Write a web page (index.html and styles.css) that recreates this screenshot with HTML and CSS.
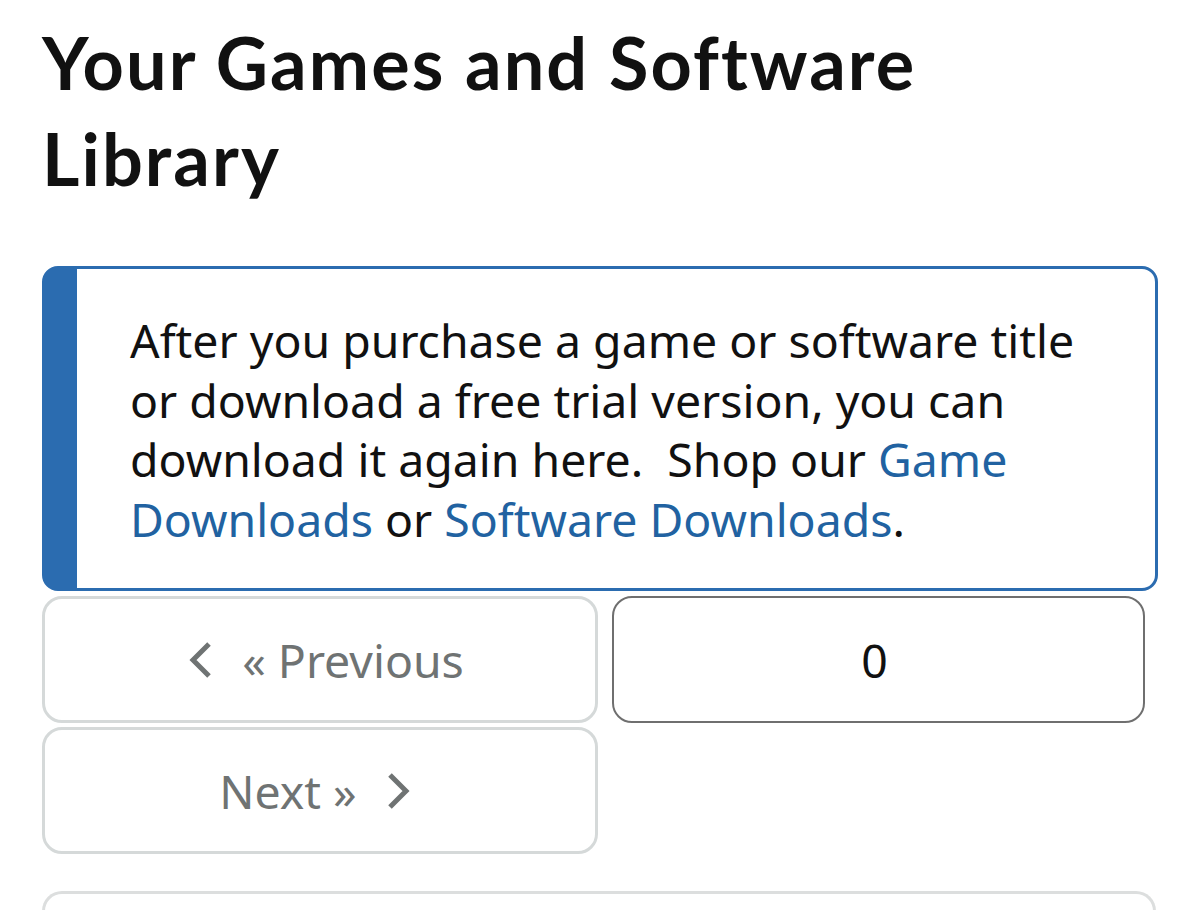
FILE: index.html
```html
<!DOCTYPE html>
<html lang="en">
<head>
<meta charset="utf-8">
<title>Your Games and Software Library</title>
<link rel="stylesheet" href="styles.css">
</head>
<body>
<main class="page">
  <h1 class="title">Your Games and Software Library</h1>
  <div class="alert">
    <p class="alert-text">After you purchase a game or software title or download a free trial version, you can download it again here.&nbsp; Shop our <a href="#">Game Downloads</a> or <a href="#">Software Downloads</a>.</p>
  </div>
  <nav class="pager">
    <button class="pbtn prev" type="button">
      <svg class="chev" viewBox="0 0 24 38" width="24" height="38"><path d="M21 3 L5 19 L21 35" fill="none" stroke="currentColor" stroke-width="5"/></svg>
      <span>« Previous</span>
    </button>
    <div class="page-num">0</div>
    <button class="pbtn next" type="button">
      <span>Next »</span>
      <svg class="chev" viewBox="0 0 24 38" width="24" height="38"><path d="M3 3 L19 19 L3 35" fill="none" stroke="currentColor" stroke-width="5"/></svg>
    </button>
  </nav>
  <div class="next-card"></div>
</main>
</body>
</html>
```
FILE: styles.css
```css
html, body {
  margin: 0;
  padding: 0;
  background: #ffffff;
}
body {
  font-family: "Noto Sans", sans-serif;
  color: #0f1111;
  overflow: hidden;
}
.page {
  padding: 14px 42px 0 42px;
}
.title {
  margin: 0;
  font-family: Lato, sans-serif;
  font-weight: 700;
  font-size: 72px;
  line-height: 96px;
  letter-spacing: 2.1px;
  color: #111111;
  width: 1000px;
}
.alert {
  margin-top: 60px;
  width: 1116px;
  box-sizing: border-box;
  height: 325px;
  border: 3px solid #2b6cb0;
  border-left: 35px solid #2b6cb0;
  border-radius: 16px;
  padding: 42px 50px 0 53px;
}
.alert-text {
  margin: 0;
  font-size: 46.4px;
  line-height: 59.5px;
  color: #111111;
}
.alert-text a {
  color: #2162a1;
  text-decoration: none;
}
.pager {
  display: grid;
  grid-template-columns: 556px 533px;
  column-gap: 14px;
  row-gap: 4px;
  margin-top: 5px;
}
.pbtn {
  height: 127px;
  box-sizing: border-box;
  border: 3px solid #d5d9d9;
  border-radius: 20px;
  background: #ffffff;
  display: flex;
  align-items: center;
  justify-content: center;
  gap: 30px;
  font-family: "Noto Sans", sans-serif;
  font-size: 46.4px;
  color: #6f7373;
  padding: 0;
}
.prev { padding-left: 12px; }
.next { padding-right: 10px; }
.chev { display: block; }
.page-num {
  height: 127px;
  box-sizing: border-box;
  border: 2px solid #6f6f6f;
  border-radius: 20px;
  display: flex;
  align-items: center;
  justify-content: center;
  font-size: 46.4px;
  color: #111111;
  padding-right: 8px;
}
.next-card {
  margin-top: 37px;
  width: 1114px;
  height: 60px;
  box-sizing: border-box;
  border: 3px solid #dcdede;
  border-bottom: none;
  border-radius: 20px 20px 0 0;
}
```
